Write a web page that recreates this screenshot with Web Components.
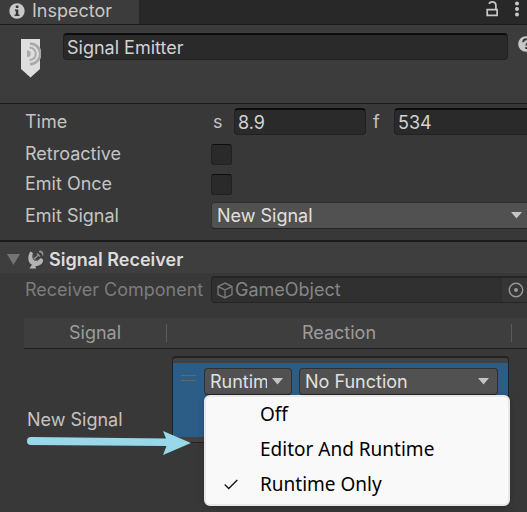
<!DOCTYPE html>
<html lang="en">
<head>
<meta charset="utf-8">
<title>Inspector</title>
<style>
html{background:#383838}
body{margin:0;min-height:100vh;overflow:hidden;background:#383838;color:#c4c4c4;font:18px/26px Inter,"Noto Sans",sans-serif;font-optical-sizing:none}
</style>
</head>
<body>
<inspector-panel>
  <inspector-tabs>Inspector</inspector-tabs>
  <emitter-header value="Signal Emitter"></emitter-header>
  <property-list>
    <time-row label="Time" seconds="8.9" frame="534"></time-row>
    <toggle-row label="Retroactive"></toggle-row>
    <toggle-row label="Emit Once"></toggle-row>
    <property-row><span slot="label">Emit Signal</span><drop-down label="Emit Signal" value="New Signal" class="bleed"></drop-down></property-row>
  </property-list>
  <component-header>Signal Receiver</component-header>
  <property-row class="object" dim><span slot="label">Receiver Component</span><object-field>GameObject</object-field></property-row>
  <reaction-table></reaction-table>
</inspector-panel>

<script>
const base = '<style>*{box-sizing:border-box}input,select,button{font:inherit;font-optical-sizing:inherit;color:inherit;margin:0}svg{display:block}';
const field = 'input.text{display:block;width:100%;min-width:0;height:27px;padding:0 3px;background:#2a2a2a;border:1px solid #212121;border-top:2px solid #0d0d0d;border-radius:4px;outline:0;color:#d2d2d2}';
function define(name, css, html) {
  customElements.define(name, class extends HTMLElement {
    connectedCallback() {
      if (this.shadowRoot) return;
      const t = document.createElement('template');
      t.innerHTML = base + css + '</style>' + html.replace(/\{(\w+)\}/g, (m, k) => this.getAttribute(k) || '');
      this.attachShadow({mode: 'open'}).append(t.content.cloneNode(true));
    }
  });
}

define('inspector-panel', ':host{display:block;overflow:hidden;min-height:100vh}::slotted(.object){margin-top:3px}', '<slot></slot>');

define('inspector-tabs', `:host{display:block}
.bar{display:flex;justify-content:space-between;height:25px;background:#282828;border-bottom:1px solid #1a1a1a}
.tab{display:flex;align-items:center;gap:7px;width:139px;padding:0 0 2px 9px;background:#3c3c3c;border:0;color:#c8c8c8}
.tools{display:flex;gap:15px;padding-right:7px}
.tools button{padding:0;border:0;background:none;height:18px}`,
`<nav class="bar"><button class="tab"><svg width="16" height="16" viewBox="0 0 16 16"><circle cx="8" cy="8" r="7.7" fill="#c8c8c8"/><path d="M6.8 2.6h2.6v2.3H6.8zM6 6.4h3.3v5h1.2v1.5H5.6v-1.5h1.2V7.9H6z" fill="#333"/></svg><slot></slot></button>
<div class="tools"><button aria-label="Lock"><svg width="14" height="18" viewBox="0 0 14 18"><path d="M2.2 9.700h9.900v5.600H2.200z M10.900 9V5.500C10.900 0.800 4.800 1 4.200 4" fill="none" stroke="#c8c8c8" stroke-width="1.700"/></svg></button>
<button aria-label="More"><svg width="6" height="18" viewBox="0 0 6 18"><g fill="#c8c8c8"><circle cx="3" cy="3.500" r="2"/><circle cx="3" cy="9" r="2"/><circle cx="3" cy="14.500" r="2"/></g></svg></button></div></nav>`);

define('emitter-header', `:host{display:block}${field}
.head{display:grid;grid-template-columns:42px 1fr 19px;align-items:start;height:79px;padding:8px 0 0 21px;background:#3c3c3c;border-bottom:1px solid #1a1a1a}
.head>svg{margin-top:6px}.help{padding:0;border:0;background:none;margin:3px -6px 0 10px}`,
`<header class="head"><svg width="20" height="40" viewBox="0 0 20 40"><path d="M0 0h19v30L9.500 38.500 0 30z" fill="#dedede"/><g fill="none" stroke="#a9a9a9"><path d="M9 4.500a10.200 10.200 0 0 1 0 20.600" stroke-width="2.600"/><path d="M8.500 8.500a6.300 6.300 0 0 1 0 12.600" stroke-width="2"/></g><path d="M6 11.500c5-1 5 7.500 0 6.500z" fill="#aaa"/></svg>
<input class="text" aria-label="Name" value="{value}"><button class="help" aria-label="Help"><svg width="16" height="16" viewBox="0 0 16 16"><circle cx="8" cy="8" r="7.800" fill="#c8c8c8"/><path d="M5.200 6.200c0-4 6-3.600 5.600-.4-.2 1.800-2.600 1.700-2.600 3.700M8.200 11v2" fill="none" stroke="#383838" stroke-width="1.900"/></svg></button></header>`);

define('property-list', ':host{display:flex;flex-direction:column;box-sizing:border-box;height:136px;padding-top:4px}::slotted(time-row){margin-bottom:4px}::slotted(property-row){margin-top:3px}', '<slot></slot>');

define('property-row', `:host{display:grid;grid-template-columns:186px minmax(0,1fr);padding-left:25px;align-items:center}
:host([dim]){color:#7c7c7c}.label{white-space:nowrap}`, '<div class="label"><slot name="label"></slot></div><slot></slot>');

define('time-row', `:host{display:block}${field}
.row{display:grid;grid-template-columns:186px 23px minmax(0,132fr) 28px minmax(0,137fr);align-items:center;margin-right:-4px;padding-left:25px}
.s{padding-left:2px}.f{padding-left:7px}`,
`<div class="row"><span>{label}</span><label class="s" for="s">s</label><input class="text" id="s" value="{seconds}"><label class="f" for="f">f</label><input class="text" id="f" value="{frame}"></div>`);

define('toggle-row', `:host{display:block}
.row{display:grid;grid-template-columns:186px 1fr;align-items:center;height:30px;padding-left:25px}
input{appearance:none;width:21px;height:21px;background:#2a2a2a;border:1px solid #212121;border-top-color:#0d0d0d;border-radius:3px}`,
'<div class="row"><label for="c">{label}</label><input type="checkbox" id="c"></div>');

define('drop-down', `:host{display:block;min-width:0}:host(.bleed){margin-right:-4px}
.box{display:grid;align-items:center}
select{grid-area:1/1;width:100%;height:27px;appearance:none;padding:0 24px 0 5px;background:#515151;border:1px solid #303030;border-bottom-color:#242424;border-radius:4px;color:#e0e0e0;outline:0;overflow:hidden;white-space:nowrap;text-overflow:clip}
svg{grid-area:1/1;justify-self:end;margin-right:9px;pointer-events:none}`,
'<div class="box"><select aria-label="{label}"><option>{value}</option></select><svg width="11" height="7" viewBox="0 0 11 7"><path d="M0 0h11L5.500 6.500z" fill="#c4c4c4"/></svg></div>');

define('component-header', `:host{display:block}
h2{display:flex;align-items:center;height:33px;margin:0;padding:4px 0 0 7px;background:#3e3e3e;border-top:2px solid #1a1a1a;font-size:18px;font-weight:600;color:#dcdcdc}
button{padding:0;border:0;background:none}.icon{margin:0 5px 0 8px}`,
`<h2><button aria-label="Collapse"><svg width="13" height="11" viewBox="0 0 13 11"><path d="M0 0h13L6.500 11z" fill="#747474"/></svg></button><svg class="icon" width="16" height="19" viewBox="0 0 16 19"><path d="M2 2C-1.500 8 1 14 4 14.500L1.500 18.500h6.500l-.5-2.500c5 0 8-3 7.500-6.500l-2-1.500-4 3C4 11 4 6 5 3.500 4 2 3 1.500 2 2z" fill="#b4b4b4"/><path d="M5 4.500c-1 4 1 6 4.500 6" fill="none" stroke="#666" stroke-width="1.300"/><path d="M6 9l5-4.500M9 3.500l3 3M11 1.500c2.500 0 4 2 3.800 4M12 .8l3 2" fill="none" stroke="#929292" stroke-width="1.300"/></svg><slot></slot></h2>`);

define('object-field', `:host{display:block;min-width:0;margin-right:-4px}
.box{display:flex;align-items:center;height:27px;padding-left:5px;background:#303030;border:1px solid #252525;border-top-width:2px;border-radius:4px;overflow:hidden;color:#858585}
.name{flex:1;padding-left:2px}button{display:grid;place-items:center start;width:28px;height:100%;padding:0 0 0 6px;border:0;background:#363636}`,
`<div class="box"><svg width="16" height="17" viewBox="0 0 16 17"><path d="M8 1l7 3.500v8L8 16l-7-3.500v-8zM1 4.500L8 8l7-3.500M8 8v8" fill="none" stroke="#777" stroke-width="1.400"/></svg><span class="name"><slot></slot></span><button aria-label="Select object"><svg width="16" height="16" viewBox="0 0 16 16"><circle cx="8" cy="8" r="6.700" fill="none" stroke="#999" stroke-width="1.400"/><circle cx="8" cy="8" r="2" fill="#999"/></svg></button></div>`);

define('reaction-table', `:host{display:block;padding:15px 0 0 24px}
table{width:100%;border-collapse:collapse;table-layout:fixed}
th,td{padding:0;font-weight:400}
thead{background:#3e3e3e}
th{height:30px;border-bottom:1px solid #1f1f1f;color:#9c9c9c}
th div{height:18px;line-height:18px;border-right:1px solid #5a5a5a}
th:last-child div{border:0}
.c1{width:143px}.c3{width:15px}
.name{position:relative;vertical-align:top;padding:58px 0 0 3px}
.cell{padding:7px 0 0 5px}
.arrow{position:absolute;left:3px;top:81px;z-index:3}`,
`<table><thead><tr><th class="c1"><div>Signal</div></th><th><div>Reaction</div></th><th class="c3"></th></tr></thead>
<tbody><tr><td class="name">New Signal<svg class="arrow" width="164" height="26" viewBox="0 0 164 26"><path d="M4 7L139 8.500 136 1l28 12-28 12 3.500-9L4 15A4 4 0 0 1 4 7z" fill="#98d8ea"/></svg></td><td class="cell"><reaction-list></reaction-list></td><td></td></tr></tbody></table>`);

define('reaction-list', `:host{display:block;margin-right:3px}
.box{position:relative;height:87px;padding:6px 10px 0 5px;border:1px solid #222;border-top-width:2px;border-radius:4px;background:linear-gradient(#414141 5px,#2c5d87 5px 79px,#414141 79px)}
.row{display:grid;grid-template-columns:26px 88px minmax(0,1fr);align-items:center;padding-top:4px}
.row drop-down:last-of-type{margin-left:7px}
.grip{margin:-6px 0 0 3px}
pop-menu{position:absolute;left:31px;right:-2px;top:37px}`,
`<div class="box"><div class="row"><svg class="grip" width="15" height="6" viewBox="0 0 15 6"><path d="M0 .5h15M0 5.500h15" stroke="#666"/></svg><drop-down label="Call state" value="Runtime Only"></drop-down><drop-down label="Function" value="No Function"></drop-down></div><pop-menu></pop-menu></div>`);

define('pop-menu', `:host{display:block;font-family:"Noto Sans","Open Sans",sans-serif;font-size:19px;color:#000}
.menu{padding:0 0 2px;border:2px solid #e8e8e8;border-radius:6px;background:#f9f9f9;box-shadow:0 2px 6px #0003}
button{display:grid;grid-template-columns:36px 1fr;align-items:center;width:100%;height:35px;padding:0 0 0 18px;border:0;background:none;text-align:left}
span{grid-column:2}svg{grid-row:1;grid-column:1}`,
`<div class="menu" role="menu"><button role="menuitemradio" aria-checked="false"><span>Off</span></button><button role="menuitemradio" aria-checked="false"><span>Editor And Runtime</span></button><button role="menuitemradio" aria-checked="true"><svg width="14" height="11" viewBox="0 0 14 11"><path d="M.7 5.500l4 4L13.300 1" fill="none" stroke="#111" stroke-width="1.300"/></svg><span>Runtime Only</span></button></div>`);
</script>
</body>
</html>
